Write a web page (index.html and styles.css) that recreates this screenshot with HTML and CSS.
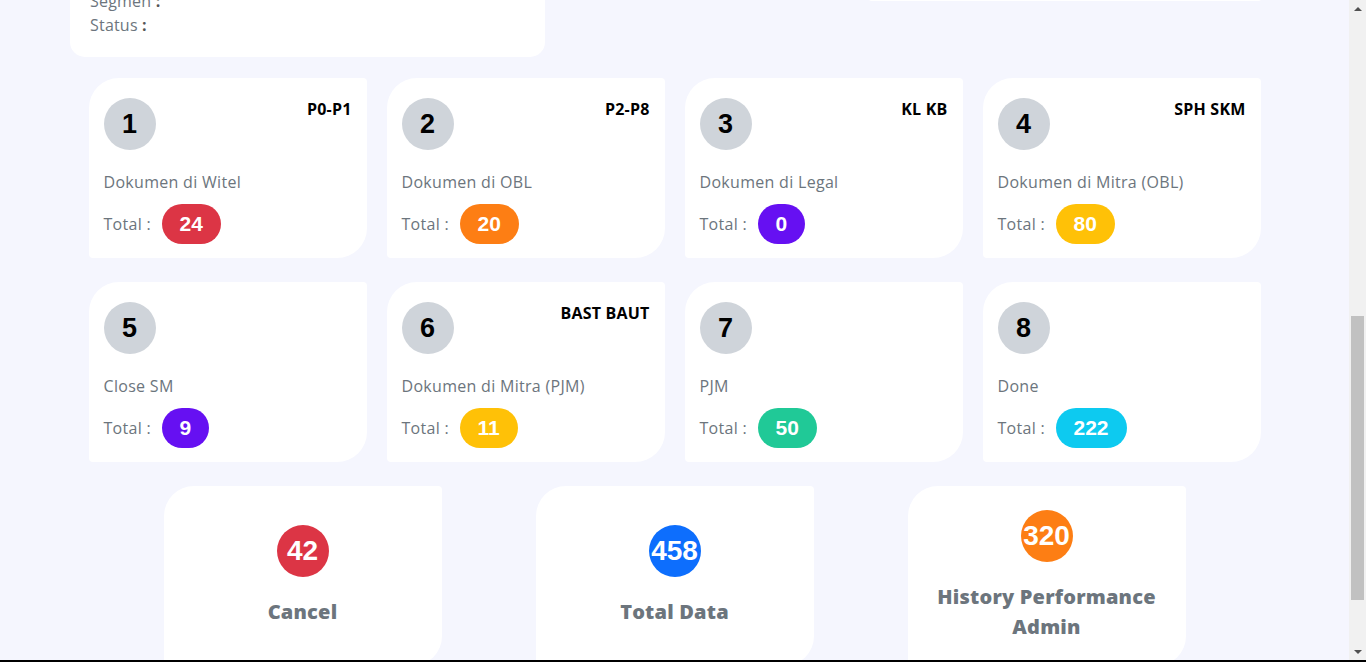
FILE: index.html
```html
<!DOCTYPE html>
<html lang="id">
<head>
<meta charset="utf-8">
<title>Dashboard Dokumen</title>
<link rel="stylesheet" href="styles.css">
</head>
<body>
<header class="navbar">
  <span class="brand">Monitoring Dokumen</span>
</header>
<main class="main">
  <h2 class="page-title">Dashboard</h2>
  <section class="banner">
    <p class="banner-text">Selamat datang di aplikasi monitoring dokumen.</p>
  </section>
  <section class="info-row">
    <div class="info-card">
      <h4 class="info-title">Detail Pengguna</h4>
      <div class="info-line">Nama <b>:</b></div>
      <div class="info-line">NIK <b>:</b></div>
      <div class="info-line">Jabatan <b>:</b></div>
      <div class="info-line">Witel <b>:</b></div>
      <div class="info-line">Unit <b>:</b></div>
      <div class="info-line">Mitra <b>:</b></div>
      <div class="info-line">Segmen <b>:</b></div>
      <div class="info-line">Status <b>:</b></div>
    </div>
    <div class="filter-card">
      <h4 class="info-title">Filter</h4>
    </div>
  </section>

  <section class="stat-grid" id="stats">
    <div class="stat-card">
      <div class="stat-head"><div class="step">1</div><span class="tag">P0-P1</span></div>
      <div class="stat-label">Dokumen di Witel</div>
      <div class="stat-total">Total : <span class="pill red">24</span></div>
    </div>
    <div class="stat-card">
      <div class="stat-head"><div class="step">2</div><span class="tag">P2-P8</span></div>
      <div class="stat-label">Dokumen di OBL</div>
      <div class="stat-total">Total : <span class="pill orange">20</span></div>
    </div>
    <div class="stat-card">
      <div class="stat-head"><div class="step">3</div><span class="tag">KL KB</span></div>
      <div class="stat-label">Dokumen di Legal</div>
      <div class="stat-total">Total : <span class="pill purple">0</span></div>
    </div>
    <div class="stat-card">
      <div class="stat-head"><div class="step">4</div><span class="tag">SPH SKM</span></div>
      <div class="stat-label">Dokumen di Mitra (OBL)</div>
      <div class="stat-total">Total : <span class="pill yellow">80</span></div>
    </div>
    <div class="stat-card">
      <div class="stat-head"><div class="step">5</div></div>
      <div class="stat-label">Close SM</div>
      <div class="stat-total">Total : <span class="pill purple">9</span></div>
    </div>
    <div class="stat-card">
      <div class="stat-head"><div class="step">6</div><span class="tag">BAST BAUT</span></div>
      <div class="stat-label">Dokumen di Mitra (PJM)</div>
      <div class="stat-total">Total : <span class="pill yellow">11</span></div>
    </div>
    <div class="stat-card">
      <div class="stat-head"><div class="step">7</div></div>
      <div class="stat-label">PJM</div>
      <div class="stat-total">Total : <span class="pill green">50</span></div>
    </div>
    <div class="stat-card">
      <div class="stat-head"><div class="step">8</div></div>
      <div class="stat-label">Done</div>
      <div class="stat-total">Total : <span class="pill cyan">222</span></div>
    </div>
  </section>

  <section class="summary-row">
    <div class="summary-card">
      <div class="dot red">42</div>
      <div class="summary-title">Cancel</div>
    </div>
    <div class="summary-card">
      <div class="dot blue">458</div>
      <div class="summary-title">Total Data</div>
    </div>
    <div class="summary-card">
      <div class="dot orange">320</div>
      <div class="summary-title">History Performance<br>Admin</div>
    </div>
  </section>
</main>
<aside class="scrollbar" aria-hidden="true">
  <div class="sb-btn"><span class="arrow-up"></span></div>
  <div class="sb-track"><div class="sb-thumb"></div></div>
  <div class="sb-btn"><span class="arrow-down"></span></div>
</aside>
<div class="screen-edge"></div>
<script src="script.js"></script>
</body>
</html>
```

FILE: styles.css
```css
html { scroll-behavior: auto; }
body {
  margin: 0 17px 0 0;
  background: #f5f6fe;
  font-family: "Open Sans", "Noto Sans", sans-serif;
  color: #6c757d;
}
.navbar {
  height: 70px;
  background: #ffffff;
  display: flex;
  align-items: center;
  padding: 0 30px;
  box-sizing: border-box;
}
.brand { font-weight: 700; font-size: 20px; color: #333; }
.main { padding: 30px 0 101px; }
.page-title {
  margin: 0 0 20px 70px;
  font-size: 28px;
  line-height: 40px;
  color: #333;
}
.banner {
  height: 300px;
  margin: 0 87px 20px 70px;
  background: #ffffff;
  border-radius: 15px;
  box-sizing: border-box;
  padding: 20px;
}
.banner-text { margin: 0; font-size: 16px; }
.info-row {
  display: flex;
  justify-content: space-between;
  align-items: flex-start;
  padding: 0 87px 0 70px;
}
.info-card {
  width: 475px;
  background: #ffffff;
  border-radius: 15px;
  padding: 20px;
  box-sizing: border-box;
}
.info-title {
  margin: 0 0 10px;
  font-size: 18px;
  line-height: 32px;
  color: #333;
}
.info-line {
  font-size: 16px;
  line-height: 24px;
  letter-spacing: 0.2px;
  color: #6c757d;
}
.info-line b { color: #555; }
.filter-card {
  width: 394px;
  height: 218px;
  background: #ffffff;
  border-radius: 15px 15px 4px 4px;
  padding: 20px;
  box-sizing: border-box;
}

.stat-grid {
  margin: 21px auto 0;
  width: 1172px;
  display: grid;
  grid-template-columns: repeat(4, 278px);
  gap: 24px 20px;
}
.stat-card {
  height: 180px;
  box-sizing: border-box;
  background: #ffffff;
  border-radius: 30px 4px 30px 4px;
  padding: 20px 15px 14px;
}
.stat-head {
  display: flex;
  justify-content: space-between;
  align-items: flex-start;
  height: 52px;
}
.step {
  width: 52px;
  height: 52px;
  border-radius: 50%;
  background: #cfd4da;
  color: #000;
  font-family: "Liberation Sans", Arial, sans-serif;
  font-weight: 700;
  font-size: 27px;
  display: flex;
  align-items: center;
  justify-content: center;
}
.tag {
  font-weight: 700;
  font-size: 16px;
  line-height: 22px;
  letter-spacing: 0.2px;
  color: #000;
}
.stat-label {
  margin-top: 20px;
  font-size: 16px;
  line-height: 24px;
  letter-spacing: 0.3px;
  color: #6c757d;
}
.stat-total {
  margin-top: 10px;
  display: flex;
  align-items: center;
  font-size: 16px;
  line-height: 24px;
  letter-spacing: 0.3px;
  color: #6c757d;
  white-space: pre;
}
.pill {
  margin-left: 6px;
  height: 40px;
  padding: 0 18px;
  border-radius: 20px;
  display: inline-flex;
  align-items: center;
  color: #ffffff;
  font-family: "Liberation Sans", Arial, sans-serif;
  font-weight: 700;
  font-size: 21px;
  letter-spacing: 0;
}
.red { background: #dc3545; }
.orange { background: #fd7e14; }
.purple { background: #6610f2; }
.yellow { background: #ffc107; }
.green { background: #20c997; }
.cyan { background: #0dcaf0; }
.blue { background: #0d6efd; }

.summary-row {
  margin-top: 24px;
  display: flex;
  justify-content: center;
  gap: 94px;
}
.summary-card {
  width: 278px;
  height: 180px;
  box-sizing: border-box;
  background: #ffffff;
  border-radius: 30px 4px 30px 4px;
  display: flex;
  flex-direction: column;
  align-items: center;
  justify-content: center;
}
.dot {
  width: 52px;
  height: 52px;
  border-radius: 50%;
  display: flex;
  align-items: center;
  justify-content: center;
  color: #ffffff;
  font-family: "Liberation Sans", Arial, sans-serif;
  font-weight: 700;
  font-size: 28px;
  white-space: nowrap;
}
.summary-title {
  margin-top: 20px;
  font-size: 20px;
  line-height: 30px;
  font-weight: 800;
  letter-spacing: 0.2px;
  text-align: center;
  color: #6c757d;
}

/* window scrollbar as shown in the capture */
.scrollbar {
  position: fixed;
  top: 0;
  right: 0;
  bottom: 2px;
  width: 17px;
  background: #f1f1f1;
  display: grid;
  grid-template-rows: 17px 1fr 17px;
  z-index: 5;
}
.sb-btn {
  display: flex;
  justify-content: center;
  align-items: center;
}
.arrow-up {
  width: 0;
  height: 0;
  border-left: 4px solid transparent;
  border-right: 4px solid transparent;
  border-bottom: 4px solid #505050;
}
.arrow-down {
  width: 0;
  height: 0;
  border-left: 4px solid transparent;
  border-right: 4px solid transparent;
  border-top: 4px solid #505050;
}
.sb-track {
  padding: 299px 2px 0;
}
.sb-thumb {
  height: 284px;
  background: #c1c1c1;
}
.screen-edge {
  position: fixed;
  left: 0;
  right: 0;
  bottom: 0;
  height: 2px;
  background: #000;
  z-index: 6;
}
```

FILE: script.js
```js
(function () {
  var grid = document.getElementById('stats');
  var top = grid.getBoundingClientRect().top + window.scrollY - 78;
  window.scrollTo(0, top);
})();
```
